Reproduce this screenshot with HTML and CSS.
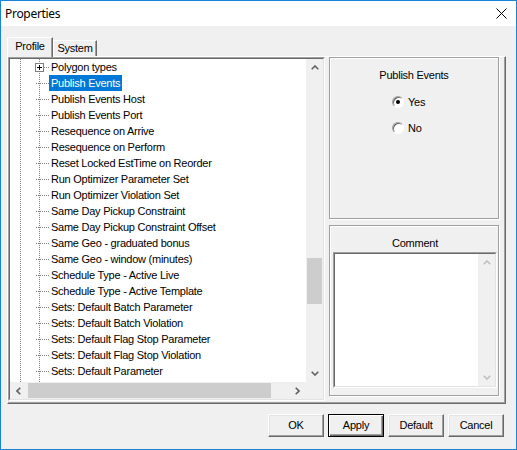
FILE: index.html
```html
<!DOCTYPE html>
<html>
<head>
<meta charset="utf-8">
<title>Properties</title>
<link rel="stylesheet" href="styles.css">
</head>
<body>
<div class="window">
  <div class="titlebar">
    <span class="title">Properties</span>
    <svg class="close" width="11" height="11" viewBox="0 0 11 11"><path d="M0.5 0.5 L10.5 10.5 M10.5 0.5 L0.5 10.5" stroke="#000" stroke-width="1" fill="none"/></svg>
  </div>
  <div class="client">
    <div class="tabs">
      <div class="tab active">Profile</div>
      <div class="tab">System</div>
    </div>
    <div class="page">
      <div class="tree">
        <div class="tree-inner">
          <div class="tree-content">
            <div class="row"><span class="exp plus"><span class="box"></span></span><span class="label">Polygon types</span></div>
            <div class="row"><span class="exp"></span><span class="label selected">Publish Events</span></div>
            <div class="row"><span class="exp"></span><span class="label">Publish Events Host</span></div>
            <div class="row"><span class="exp"></span><span class="label">Publish Events Port</span></div>
            <div class="row"><span class="exp"></span><span class="label">Resequence on Arrive</span></div>
            <div class="row"><span class="exp"></span><span class="label">Resequence on Perform</span></div>
            <div class="row"><span class="exp"></span><span class="label">Reset Locked EstTime on Reorder</span></div>
            <div class="row"><span class="exp"></span><span class="label">Run Optimizer Parameter Set</span></div>
            <div class="row"><span class="exp"></span><span class="label">Run Optimizer Violation Set</span></div>
            <div class="row"><span class="exp"></span><span class="label">Same Day Pickup Constraint</span></div>
            <div class="row"><span class="exp"></span><span class="label">Same Day Pickup Constraint Offset</span></div>
            <div class="row"><span class="exp"></span><span class="label">Same Geo - graduated bonus</span></div>
            <div class="row"><span class="exp"></span><span class="label">Same Geo - window (minutes)</span></div>
            <div class="row"><span class="exp"></span><span class="label">Schedule Type - Active Live</span></div>
            <div class="row"><span class="exp"></span><span class="label">Schedule Type - Active Template</span></div>
            <div class="row"><span class="exp"></span><span class="label">Sets: Default Batch Parameter</span></div>
            <div class="row"><span class="exp"></span><span class="label">Sets: Default Batch Violation</span></div>
            <div class="row"><span class="exp"></span><span class="label">Sets: Default Flag Stop Parameter</span></div>
            <div class="row"><span class="exp"></span><span class="label">Sets: Default Flag Stop Violation</span></div>
            <div class="row"><span class="exp"></span><span class="label">Sets: Default Parameter</span></div>
          </div>
          <div class="vscroll">
            <div class="sbtn"><svg width="8" height="5" viewBox="0 0 8 5"><path d="M0.7 4.3 L4 1 L7.3 4.3" fill="none" stroke="#606060" stroke-width="1.6"/></svg></div>
            <div class="vtrack"><div class="vthumb"></div></div>
            <div class="sbtn"><svg width="8" height="5" viewBox="0 0 8 5"><path d="M0.7 0.7 L4 4 L7.3 0.7" fill="none" stroke="#606060" stroke-width="1.6"/></svg></div>
          </div>
          <div class="hscroll">
            <div class="sbtn"><svg width="5" height="8" viewBox="0 0 5 8"><path d="M4.3 0.7 L1 4 L4.3 7.3" fill="none" stroke="#606060" stroke-width="1.6"/></svg></div>
            <div class="htrack"><div class="hthumb"></div></div>
            <div class="sbtn"><svg width="5" height="8" viewBox="0 0 5 8"><path d="M0.7 0.7 L4 4 L0.7 7.3" fill="none" stroke="#606060" stroke-width="1.6"/></svg></div>
          </div>
          <div class="corner"></div>
        </div>
      </div>
      <div class="side">
        <div class="group publish">
          <div class="group-title">Publish Events</div>
          <div class="radios">
            <div class="radio"><span class="circle checked"></span><span>Yes</span></div>
            <div class="radio"><span class="circle"></span><span>No</span></div>
          </div>
        </div>
        <div class="group comment">
          <div class="group-title">Comment</div>
          <div class="memo">
            <div class="memo-inner">
              <div class="memo-text"></div>
              <div class="memo-scroll">
                <div class="sbtn"><svg width="8" height="5" viewBox="0 0 8 5"><path d="M0.7 4.3 L4 1 L7.3 4.3" fill="none" stroke="#c0c0c0" stroke-width="1.6"/></svg></div>
                <div class="mtrack"></div>
                <div class="sbtn"><svg width="8" height="5" viewBox="0 0 8 5"><path d="M0.7 0.7 L4 4 L7.3 0.7" fill="none" stroke="#c0c0c0" stroke-width="1.6"/></svg></div>
              </div>
            </div>
          </div>
        </div>
      </div>
    </div>
    <div class="buttons">
      <div class="btn">OK</div>
      <div class="btn default">Apply</div>
      <div class="btn">Default</div>
      <div class="btn">Cancel</div>
    </div>
  </div>
</div>
</body>
</html>
```

FILE: styles.css
```css
* { box-sizing: border-box; }
html, body { margin: 0; padding: 0; }
body {
  width: 517px;
  height: 450px;
  overflow: hidden;
  font-family: "Liberation Sans", Arial, sans-serif;
  font-size: 11px;
  letter-spacing: -0.25px;
  color: #000;
  background: #f0f0f0;
}
.window {
  width: 517px;
  height: 450px;
  border: 1px solid #1883d7;
  background: #f0f0f0;
  display: flex;
  flex-direction: column;
}
.titlebar {
  height: 25px;
  flex: none;
  background: #fff;
  display: flex;
  align-items: center;
  justify-content: space-between;
  padding: 0 9px 0 4px;
}
.title {
  font-family: "Noto Sans", sans-serif;
  font-size: 12px;
  letter-spacing: -0.3px;
}
.close { display: block; }
.client {
  flex: 1;
  padding: 11px 0 0 6px;
}
.tabs {
  display: flex;
  align-items: flex-end;
  height: 20px;
  margin-bottom: -1px;
  position: relative;
  z-index: 1;
}
.tab {
  width: 44px;
  height: 16px;
  margin-bottom: 1px;
  border-top: 1px solid #fff;
  border-left: 1px solid #fff;
  border-right: 1px solid #696969;
  box-shadow: inset -1px 0 0 #a0a0a0;
  text-align: center;
  line-height: 14px;
  background: #f0f0f0;
}
.tab.active {
  width: 46px;
  height: 20px;
  margin-bottom: 0;
  line-height: 17px;
}
.page {
  width: 499px;
  height: 348px;
  border-top: 1px solid #fff;
  border-left: 1px solid #fff;
  border-right: 1px solid #696969;
  border-bottom: 1px solid #696969;
  box-shadow: inset -1px -1px 0 #a0a0a0;
  display: flex;
  gap: 4px;
}
.tree {
  width: 317px;
  height: 344px;
  border: 1px solid;
  border-color: #a0a0a0 #fff #fff #a0a0a0;
}
.tree-inner {
  height: 100%;
  border: 1px solid;
  border-color: #696969 #e3e3e3 #e3e3e3 #696969;
  display: grid;
  grid-template-columns: 1fr 17px;
  grid-template-rows: 1fr 17px;
  background: #fff;
}
.tree-content {
  overflow: hidden;
  padding-left: 25px;
  background-image:
    linear-gradient(#808080 50%, transparent 50%),
    linear-gradient(#808080 50%, transparent 50%);
  background-size: 1px 2px, 1px 2px;
  background-repeat: repeat-y, repeat-y;
  background-position: 10px 0, 29px 0;
}
.row {
  display: flex;
  height: 16px;
  line-height: 16px;
  white-space: nowrap;
}
.exp {
  width: 14px;
  flex: none;
  position: relative;
  background-image: linear-gradient(to right, #808080 50%, transparent 50%);
  background-size: 2px 1px;
  background-repeat: repeat-x;
  background-position: 5px 8px;
}
.exp.plus {
  background-position: 9px 8px;
}
.box {
  position: absolute;
  left: 0;
  top: 4px;
  width: 9px;
  height: 9px;
  border: 1px solid #808080;
  background: #fff;
}
.box::before {
  content: "";
  position: absolute;
  left: 1px;
  top: 3px;
  width: 5px;
  height: 1px;
  background: #000;
}
.box::after {
  content: "";
  position: absolute;
  left: 3px;
  top: 1px;
  width: 1px;
  height: 5px;
  background: #000;
}
.label {
  padding: 0 2px;
}
.label.selected {
  background: #0078d7;
  color: #fff;
}
.vscroll, .hscroll, .corner, .memo-scroll {
  background: #f0f0f0;
}
.vscroll {
  display: flex;
  flex-direction: column;
}
.sbtn {
  flex: none;
  width: 17px;
  height: 17px;
  display: flex;
  align-items: center;
  justify-content: center;
}
.sbtn svg { display: block; }
.vtrack { flex: 1; }
.vthumb {
  margin: 182px 1px 0 1px;
  height: 46px;
  background: #cdcdcd;
}
.hscroll {
  display: flex;
}
.htrack { flex: 1; }
.hthumb {
  margin: 1px 0 1px 1px;
  width: 243px;
  height: 15px;
  background: #cdcdcd;
}
.side {
  width: 171px;
  display: flex;
  flex-direction: column;
}
.group {
  width: 170px;
  border: 1px solid #a0a0a0;
  box-shadow: inset 1px 1px 0 #fff, 1px 1px 0 #fff;
}
.publish { height: 162px; }
.comment {
  height: 171px;
  margin-top: 6px;
  padding: 0 1px 0 3px;
}
.group-title {
  text-align: center;
  line-height: 13px;
  margin-top: 11px;
}
.radios {
  margin-top: 12px;
  padding-left: 62px;
  display: flex;
  flex-direction: column;
  gap: 10px;
}
.radio {
  display: flex;
  align-items: center;
  height: 16px;
  gap: 4px;
}
.circle {
  width: 12px;
  height: 12px;
  border-radius: 50%;
  border: 1px solid;
  border-color: #a0a0a0 #fff #fff #a0a0a0;
  box-shadow: inset 1px 1px 0 #696969;
  background: #fff;
  position: relative;
}
.circle.checked::after {
  content: "";
  position: absolute;
  left: 3px;
  top: 3px;
  width: 4px;
  height: 4px;
  border-radius: 50%;
  background: #000;
}
.memo {
  margin-top: 2px;
  height: 136px;
  border: 1px solid;
  border-color: #a0a0a0 #fff #fff #a0a0a0;
}
.memo-inner {
  height: 100%;
  border: 1px solid;
  border-color: #696969 #e3e3e3 #e3e3e3 #696969;
  display: flex;
  background: #fff;
}
.memo-text { flex: 1; }
.memo-scroll {
  width: 17px;
  display: flex;
  flex-direction: column;
}
.mtrack { flex: 1; }
.buttons {
  display: flex;
  justify-content: flex-end;
  gap: 4px;
  margin-top: 10px;
  padding-right: 12px;
}
.btn {
  width: 56px;
  height: 23px;
  border: 1px solid;
  border-color: #fff #696969 #696969 #fff;
  box-shadow: inset -1px -1px 0 #a0a0a0, inset 1px 1px 0 #e3e3e3;
  text-align: center;
  line-height: 21px;
  background: #f0f0f0;
}
.btn.default {
  border: 1px solid #000;
  box-shadow: inset 1px 1px 0 #fff, inset -1px -1px 0 #696969, inset -2px -2px 0 #a0a0a0;
}
```
